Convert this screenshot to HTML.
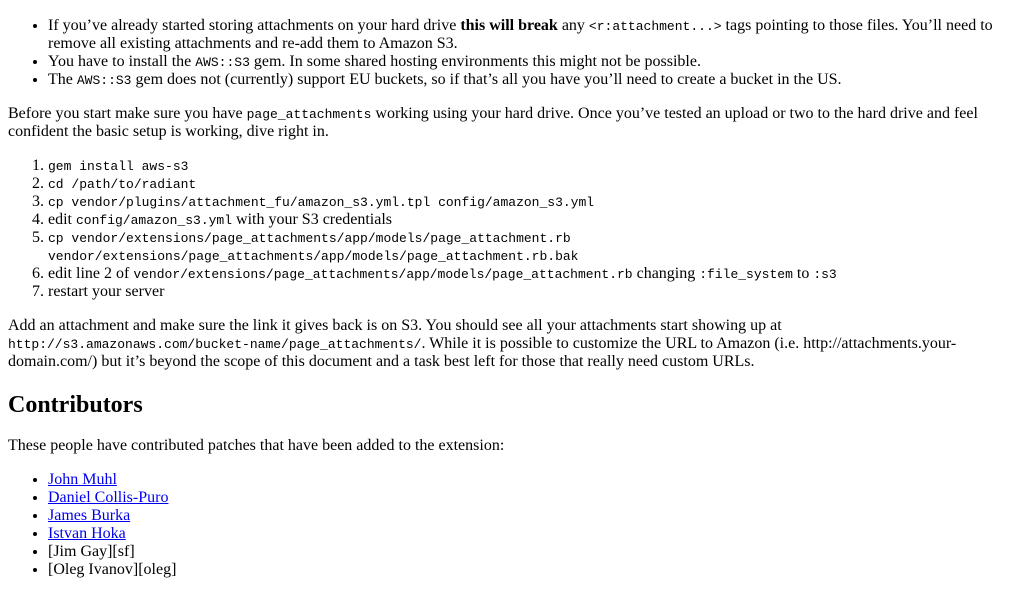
<!DOCTYPE html>
<html><head><meta charset="utf-8"><style>
body{margin:0 8px;font-family:"Liberation Serif",serif;font-size:16px;line-height:18px;color:#000;background:#fff;}
code{font-family:"Liberation Mono",monospace;font-size:13px;line-height:1;}
ul,ol{padding-left:40px;margin:16px 0;}
ul.first{margin-top:17px;}
p{margin:16px 0;}
h2{font-size:24px;line-height:28px;margin:20px 0 18px;}
a{color:#0000ee;text-decoration:underline;}
</style></head><body>
<ul class="first">
<li>If you’ve already started storing attachments on your hard drive <b>this will break</b> any <code>&lt;r:attachment...&gt;</code> tags pointing to those files. You’ll need to remove all existing attachments and re-add them to Amazon S3.</li>
<li>You have to install the <code>AWS::S3</code> gem. In some shared hosting environments this might not be possible.</li>
<li>The <code>AWS::S3</code> gem does not (currently) support EU buckets, so if that’s all you have you’ll need to create a bucket in the US.</li>
</ul>
<p>Before you start make sure you have <code>page_attachments</code> working using your hard drive. Once you’ve tested an upload or two to the hard drive and feel confident the basic setup is working, dive right in.</p>
<ol>
<li><code>gem install aws-s3</code></li>
<li><code>cd /path/to/radiant</code></li>
<li><code>cp vendor/plugins/attachment_fu/amazon_s3.yml.tpl config/amazon_s3.yml</code></li>
<li>edit <code>config/amazon_s3.yml</code> with your S3 credentials</li>
<li><code>cp vendor/extensions/page_attachments/app/models/page_attachment.rb<br>vendor/extensions/page_attachments/app/models/page_attachment.rb.bak</code></li>
<li>edit line 2 of <code>vendor/extensions/page_attachments/app/models/page_attachment.rb</code> changing <code>:file_system</code> to <code>:s3</code></li>
<li>restart your server</li>
</ol>
<p>Add an attachment and make sure the link it gives back is on S3. You should see all your attachments start showing up at<br><code>http://s3.amazonaws.com/bucket-name/page_attachments/</code>. While it is possible to customize the URL to Amazon (i.e. http://attachments.your-domain.com/) but it’s beyond the scope of this document and a task best left for those that really need custom URLs.</p>
<h2>Contributors</h2>
<p>These people have contributed patches that have been added to the extension:</p>
<ul>
<li><a>John Muhl</a></li>
<li><a>Daniel Collis-Puro</a></li>
<li><a>James Burka</a></li>
<li><a>Istvan Hoka</a></li>
<li>[Jim Gay][sf]</li>
<li>[Oleg Ivanov][oleg]</li>
</ul>
</body></html>
